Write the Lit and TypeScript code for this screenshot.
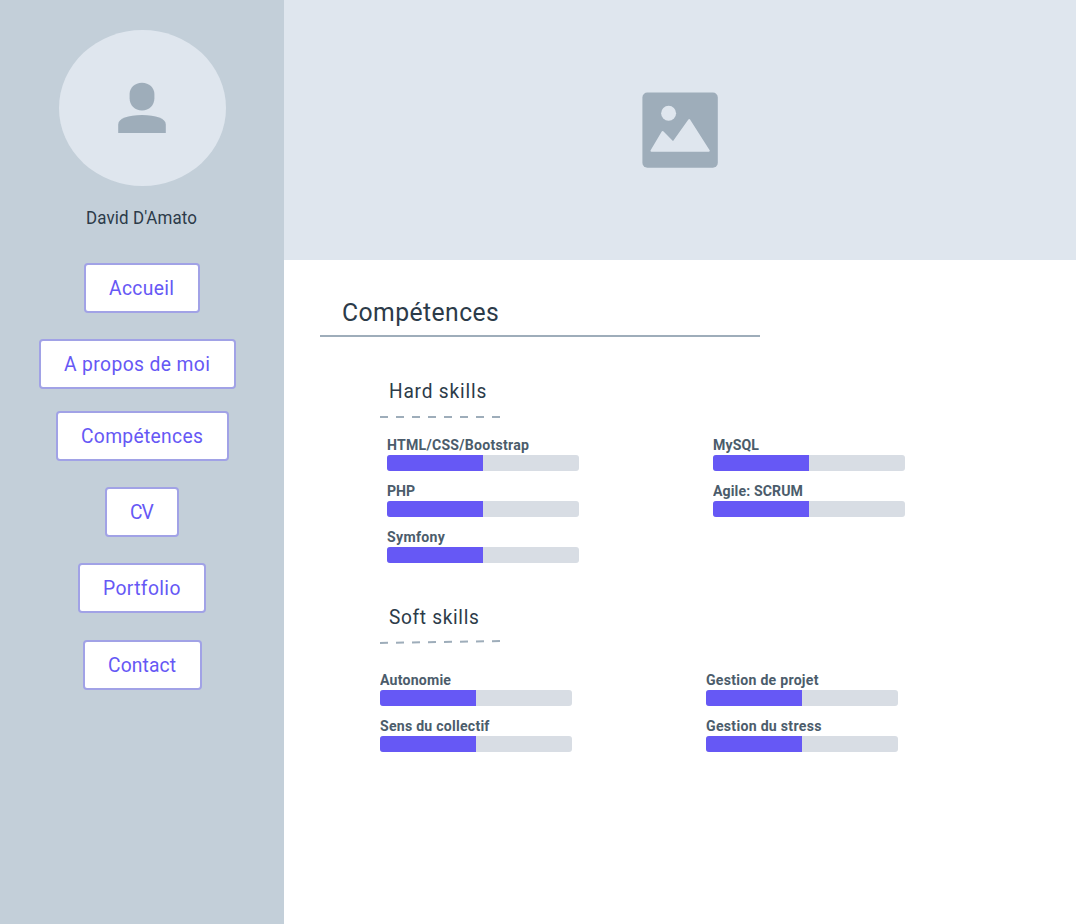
import { LitElement, html, css, svg } from "lit";
import { customElement, property } from "lit/decorators.js";
import { styleMap } from "lit/directives/style-map.js";

interface NavItem { label: string; text: number; width: number; left: number; top: number; }
interface Skill { label: string; text: number; value: number; }

const NAV: NavItem[] = [
  { label: "Accueil", text: 65, width: 116, left: 84, top: 0 },
  { label: "A propos de moi", text: 146, width: 197, left: 39, top: 26 },
  { label: "Compétences", text: 122, width: 173, left: 56, top: 22 },
  { label: "CV", text: 23.5, width: 74, left: 105, top: 26 },
  { label: "Portfolio", text: 77.5, width: 128, left: 78, top: 26 },
  { label: "Contact", text: 68, width: 119, left: 83, top: 27 },
];

const HARD: Skill[][] = [
  [
    { label: "HTML/CSS/Bootstrap", text: 142, value: 50 },
    { label: "PHP", text: 28, value: 50 },
    { label: "Symfony", text: 58, value: 50 },
  ],
  [
    { label: "MySQL", text: 46, value: 50 },
    { label: "Agile: SCRUM", text: 90, value: 50 },
  ],
];

const SOFT: Skill[][] = [
  [
    { label: "Autonomie", text: 71, value: 50 },
    { label: "Sens du collectif", text: 109.5, value: 50 },
  ],
  [
    { label: "Gestion de projet", text: 112.5, value: 50 },
    { label: "Gestion du stress", text: 115.5, value: 50 },
  ],
];

// Horizontal scale that gives the letters their narrow proportions.
const CONDENSE = 0.94;

/** A line of condensed text whose tracking is adjusted so that it spans a given width. */
@customElement("fitted-text")
class FittedText extends LitElement {
  @property({ type: Number }) span = 0;
  @property() text = "";

  static styles = css`
    :host { display: inline-block; white-space: nowrap; }
    .line { display: inline-block; transform: scaleX(${CONDENSE}); transform-origin: 0 50%; }
  `;

  render() {
    return html`<span class="line">${this.text}</span>`;
  }

  updated() {
    this.style.letterSpacing = "0px";
    const natural = this.renderRoot.querySelector("span")!.getBoundingClientRect().width;
    const tracking = (this.span - natural) / CONDENSE / Math.max(1, this.text.length - 0.7);
    this.style.letterSpacing = `${tracking.toFixed(3)}px`;
  }
}

@customElement("skill-bar")
class SkillBar extends LitElement {
  @property({ attribute: false }) skill!: Skill;

  static styles = css`
    :host { display: block; width: 192px; height: 46px; }
    .label { display: block; height: 20px; line-height: 20px; font-size: 15px; font-weight: 700; color: #4b5c6b; }
    .track { height: 16px; border-radius: 3px; background: #d8dde4; overflow: hidden; }
    .fill { height: 100%; background: #6658f5; }
  `;

  render() {
    const s = this.skill;
    return html`
      <fitted-text class="label" .text=${s.label} .span=${s.text}></fitted-text>
      <div class="track"><div class="fill" style=${styleMap({ width: `${s.value}%` })}></div></div>
    `;
  }
}

@customElement("app-root")
class AppRoot extends LitElement {
  static styles = css`
    :host {
      display: flex; width: 1080px; height: 924px; overflow: hidden; background: #fff;
      font-family: Roboto, "Open Sans", sans-serif; color: #2c3b49;
    }
    .sidebar { flex: none; width: 284px; background: #c3cfd9; display: flex; flex-direction: column; }
    .avatar {
      flex: none; margin: 30px 0 0 59px; width: 167px; height: 156px; border-radius: 50%; background: #dfe6ee;
    }
    .avatar svg, .banner svg { display: block; }
    .name { margin: 20px 0 0 86px; height: 24px; line-height: 24px; font-size: 18px; }
    .nav { display: flex; flex-direction: column; align-items: flex-start; margin-top: 33px; }
    .button {
      box-sizing: border-box; height: 50px; padding: 0 0 0 22.8px; border: 2px solid #a1a2e6;
      border-radius: 4px; background: #fff; color: #6658f5; font: inherit; font-size: 20.5px;
      line-height: 46px; text-align: left;
    }
    .main { flex: none; width: 792px; }
    .banner { height: 260px; background: #dfe6ee; display: flex; justify-content: center; align-items: center; }
    .title {
      box-sizing: border-box; margin: 35px 0 0 36px; width: 440px; height: 42px; padding-left: 22px;
      border-bottom: 2px solid #9eadba; font-size: 26.3px; font-weight: 400; line-height: 34px;
    }
    .section { padding-left: 96px; }
    .hard { margin-top: 39px; }
    .soft { margin-top: 29px; }
    .subtitle { margin: 0; padding-left: 9px; height: 30px; line-height: 30px; font-size: 20.3px; font-weight: 400; }
    .rule { display: block; margin-top: 7px; }
    .columns { display: flex; gap: 134px; }
    .hard .columns { padding-left: 7px; margin-top: 15px; }
    .soft .columns { margin-top: 24px; }
  `;

  private columns(groups: Skill[][]) {
    return html`<div class="columns">
      ${groups.map((g) => html`<div>${g.map((s) => html`<skill-bar .skill=${s}></skill-bar>`)}</div>`)}
    </div>`;
  }

  private rule(y1: number, y2: number) {
    return html`<svg class="rule" width="120" height="7" viewBox="0 0 120 7">
      ${svg`<path d="M0 ${y1}L120 ${y2}" stroke="#9eadba" stroke-width="2" stroke-dasharray="8 8" />`}
    </svg>`;
  }

  render() {
    return html`
      <aside class="sidebar">
        <div class="avatar">
          <svg width="167" height="156" viewBox="59 30 167 156" fill="#9eadba">
            <path d="M142 82.7C149.2 82.7 154.4 87.7 154.4 94V98.3C154.4 105.2 149.2 110.5 142 110.5S129.6 105.2 129.6 98.3V94C129.6 87.7 134.8 82.7 142 82.7Z" />
            <path d="M118.2 133V124.5C118.2 118.5 128 115.1 142 115.1S165.8 118.5 165.8 124.5V133Z" />
          </svg>
        </div>
        <fitted-text class="name" .text=${"David D'Amato"} .span=${111}></fitted-text>
        <nav class="nav">
          ${NAV.map((n) => html`<button class="button"
            style=${styleMap({ width: `${n.width}px`, margin: `${n.top}px 0 0 ${n.left}px` })}
          ><fitted-text .text=${n.label} .span=${n.text}></fitted-text></button>`)}
        </nav>
      </aside>
      <main class="main">
        <div class="banner">
          <svg width="76" height="76" viewBox="642 92 76 76">
            <rect x="642.4" y="92.5" width="75.4" height="75.2" rx="5" fill="#9eadba" />
            <circle cx="668.6" cy="113.3" r="7.5" fill="#dfe6ee" />
            <path d="M651.5 150.7L662.6 132L673.2 142.7L689.2 120L708.8 150.7Z" fill="#dfe6ee" stroke="#dfe6ee" stroke-width="2" stroke-linejoin="round" />
          </svg>
        </div>
        <h1 class="title"><fitted-text .text=${"Compétences"} .span=${157}></fitted-text></h1>
        <section class="section hard">
          <h2 class="subtitle"><fitted-text .text=${"Hard skills"} .span=${97.5}></fitted-text></h2>
          ${this.rule(4, 4)}
          ${this.columns(HARD)}
        </section>
        <section class="section soft">
          <h2 class="subtitle"><fitted-text .text=${"Soft skills"} .span=${90}></fitted-text></h2>
          ${this.rule(4, 2)}
          ${this.columns(SOFT)}
        </section>
      </main>
    `;
  }
}
